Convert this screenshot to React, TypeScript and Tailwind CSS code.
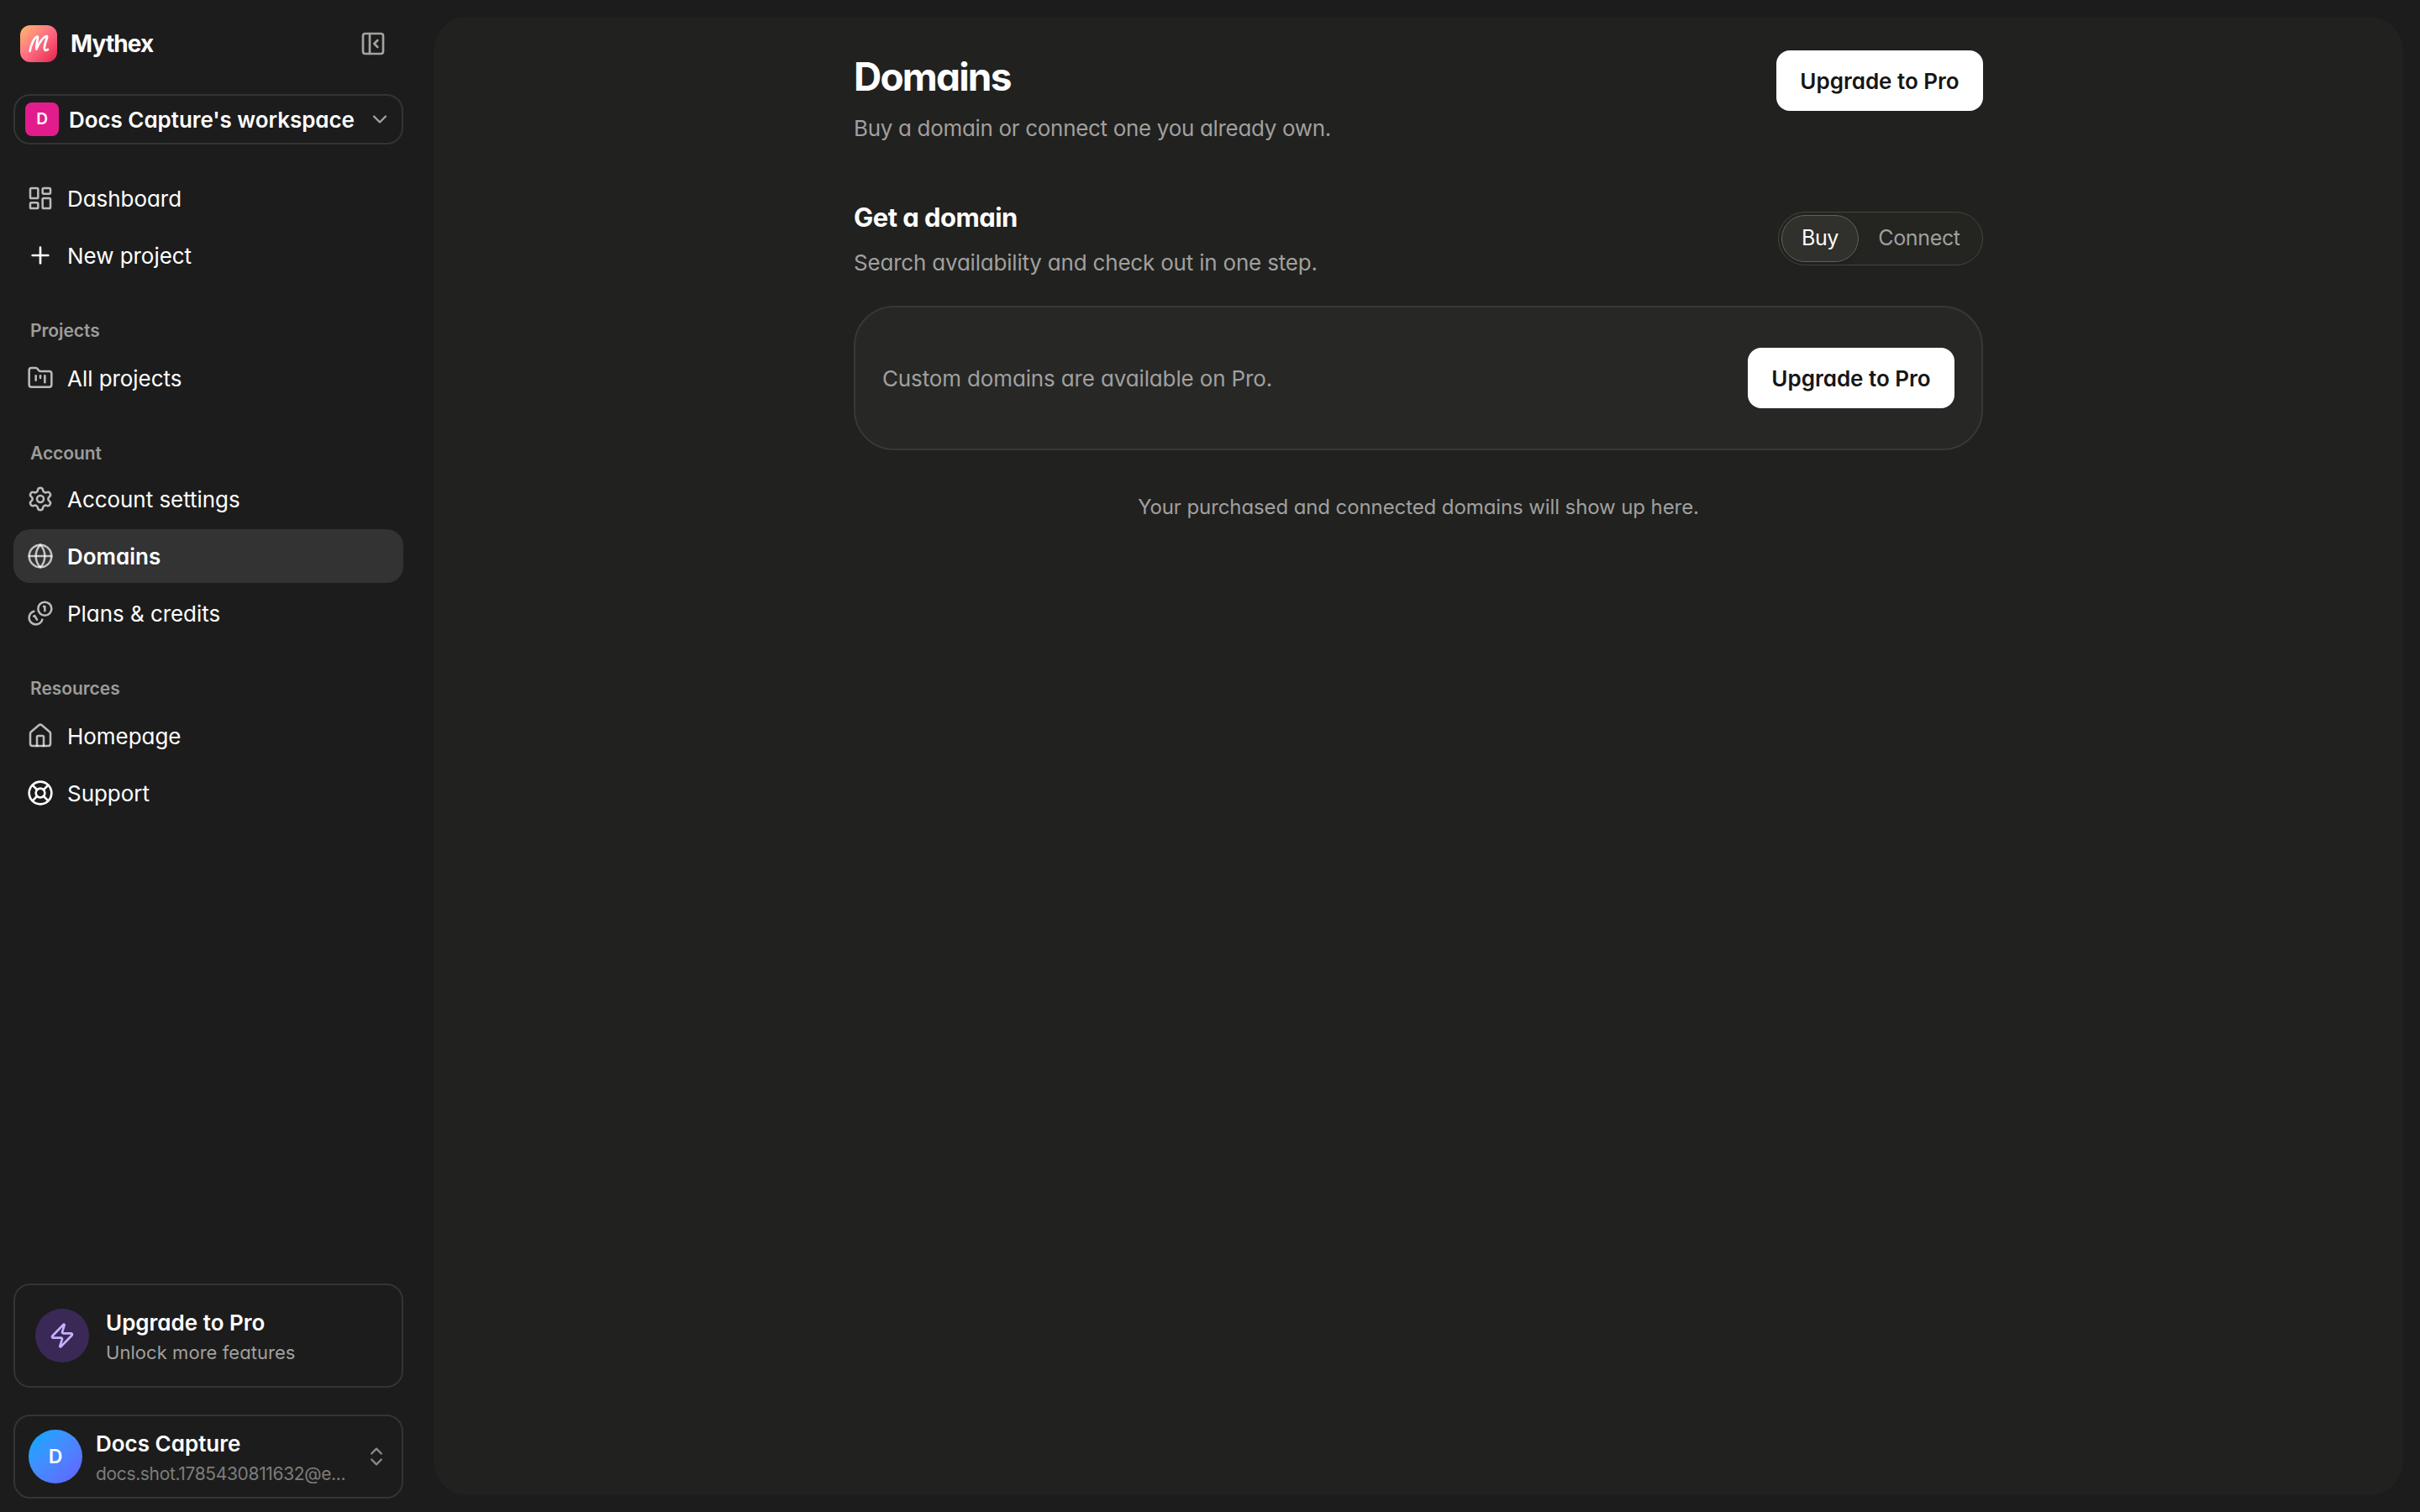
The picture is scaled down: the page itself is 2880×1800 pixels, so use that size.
import type { ComponentType, ReactNode } from "react";
import {
  ChevronDown,
  ChevronsUpDown,
  FolderKanban,
  Globe,
  House,
  LayoutDashboard,
  LifeBuoy,
  PanelLeftClose,
  Plus,
  Settings,
  Zap,
} from "lucide-react";

type IconType = ComponentType<{ className?: string; strokeWidth?: number | string }>;

function Logo() {
  return (
    <div className="flex size-11 items-center justify-center rounded-xl bg-linear-135 from-[#ffb86a] via-[#ff6b84] to-[#e0174a]">
      <svg viewBox="0 0 44 44" className="size-11" fill="none" stroke="#fff" strokeWidth="2.7" strokeLinecap="round" strokeLinejoin="round">
        <path d="M11.600 30.800C12.600 24 16.500 14.500 20.200 13.500C22.400 13.400 18.800 22 19.300 28.600C21.500 22.500 27.500 13.500 31.600 13C33.800 13 28.300 22.500 28.800 28C29.100 30.800 31.300 30 33 28.900" />
      </svg>
    </div>
  );
}

function Coins({ className, strokeWidth }: { className?: string; strokeWidth?: number | string }) {
  return (
    <svg viewBox="0 0 24 24" className={className} fill="none" stroke="currentColor" strokeWidth={strokeWidth} strokeLinecap="round" strokeLinejoin="round">
      <circle cx="16" cy="8" r="6" />
      <path d="M13.744 17.736a6 6 0 1 1-7.480-7.480" />
      <path d="M15 6h1v4" />
      <path d="m6.134 14.768.866-.5 2 3.464" />
    </svg>
  );
}

function NavItem({ icon: Icon, label, active, bright, stroke = 1.9 }: { icon: IconType; label: string; active?: boolean; bright?: boolean; stroke?: number }) {
  return (
    <a className={`flex h-16 items-center gap-4 rounded-[20px] px-4 text-[26px] ${active ? "bg-[#333333] font-semibold" : "tracking-[-0.05px]"}`}>
      <Icon className={`size-8 ${bright ? "text-white" : "text-white/70"}`} strokeWidth={stroke} />
      <span>{label}</span>
    </a>
  );
}

function NavSection({ title, className, children }: { title: string; className: string; children: ReactNode }) {
  return (
    <section className={className}>
      <h3 className="px-5 pt-px text-[21px] leading-7 font-semibold tracking-[-0.05px] text-[#9c9c9a]">{title}</h3>
      {children}
    </section>
  );
}

function Sidebar() {
  return (
    <aside className="flex w-[516px] shrink-0 flex-col pr-9 pl-4 pt-[30px] pb-4">
      <div className="flex h-11 items-center pr-5 pl-2">
        <Logo />
        <span className="ml-4 text-[28px] font-bold tracking-[-0.9px]">Mythex</span>
        <PanelLeftClose className="ml-auto size-8 text-[#a3a3a1]" strokeWidth={2} />
      </div>

      <button className="mt-[38px] flex h-[60px] items-center rounded-[20px] border-2 border-[#343433] px-3">
        <span className="flex size-10 items-center justify-center rounded-lg bg-[#e31c8d] text-[19px] font-semibold">D</span>
        <span className="ml-3 text-[26px] font-semibold tracking-[-0.05px]">Docs Capture's workspace</span>
        <ChevronDown className="ml-auto size-7 text-[#a3a3a1]" strokeWidth={2} />
      </button>

      <nav className="mt-8 flex flex-col">
        <div className="flex flex-col gap-1">
          <NavItem icon={LayoutDashboard} label="Dashboard" />
          <NavItem icon={Plus} label="New project" bright stroke={2} />
        </div>
        <NavSection title="Projects" className="mt-[43px]">
          <div className="mt-2.5">
            <NavItem icon={FolderKanban} label="All projects" />
          </div>
        </NavSection>
        <NavSection title="Account" className="mt-[43px]">
          <div className="mt-2 flex flex-col gap-1">
            <NavItem icon={Settings} label="Account settings" />
            <NavItem icon={Globe} label="Domains" active />
            <NavItem icon={Coins} label="Plans & credits" />
          </div>
        </NavSection>
        <NavSection title="Resources" className="mt-[43px]">
          <div className="mt-2.5 flex flex-col gap-1">
            <NavItem icon={House} label="Homepage" />
            <NavItem icon={LifeBuoy} label="Support" bright stroke={2} />
          </div>
        </NavSection>
      </nav>

      <div className="mt-auto flex flex-col gap-8">
        <div className="flex h-[124px] items-center gap-5 rounded-[20px] border-2 border-[#343433] px-6">
          <div className="flex size-16 items-center justify-center rounded-full bg-[#3a2956]">
            <Zap className="size-8 text-[#c4b4ff]" strokeWidth={2} />
          </div>
          <div className="flex flex-col gap-[3px] pt-px">
            <span className="text-[26px] leading-9 font-semibold">Upgrade to Pro</span>
            <span className="text-[22px] leading-7 tracking-[0.05px] text-[#a0a09e]">Unlock more features</span>
          </div>
        </div>
        <div className="flex h-[100px] items-center rounded-[20px] border-2 border-[#343433] px-4">
          <div className="flex size-16 items-center justify-center rounded-full bg-linear-135 from-[#00a6ff] from-10% to-[#615fff] text-[23px] font-semibold">D</div>
          <div className="ml-4 flex flex-col gap-1 pt-1.5">
            <span className="text-[26px] leading-8 font-semibold">Docs Capture</span>
            <span className="text-[21px] leading-8 tracking-[-0.35px] text-[#7d7d7b]">docs.shot.1785430811632@e...</span>
          </div>
          <ChevronsUpDown className="ml-auto size-7 text-[#8a8a88]" strokeWidth={2} />
        </div>
      </div>
    </aside>
  );
}

function UpgradeButton() {
  return (
    <button className="flex h-[72px] w-[246px] items-center justify-center rounded-2xl bg-white text-[26px] font-semibold text-[#161616]">
      Upgrade to Pro
    </button>
  );
}

export default function App() {
  return (
    <div className="flex h-[1800px] w-[2880px] overflow-hidden bg-[#1c1c1c] font-['Inter',sans-serif] text-white [font-feature-settings:'cv11']">
      <Sidebar />
      <main className="my-5 mr-5 flex flex-1 justify-center rounded-[40px] bg-[#212120]">
        <div className="flex w-[1344px] flex-col pt-10">
          <header className="flex items-start justify-between">
            <div>
              <h1 className="text-[46px] leading-[62px] font-bold tracking-[-1.8px]">Domains</h1>
              <p className="mt-[13px] text-[26px] leading-9 tracking-[-0.32px] text-[#a0a09e]">Buy a domain or connect one you already own.</p>
            </div>
            <UpgradeButton />
          </header>

          <div className="mt-[68px] flex justify-between">
            <div>
              <h2 className="text-[31px] leading-10 font-bold tracking-[-0.55px]">Get a domain</h2>
              <p className="mt-4 text-[26px] leading-9 tracking-[-0.2px] text-[#a0a09e]">Search availability and check out in one step.</p>
            </div>
            <div className="mt-[13px] flex h-16 rounded-full border border-[#444440] bg-[#242420] p-[3px] text-[25px] tracking-[-0.35px]">
              <button className="flex w-[92px] items-center justify-center rounded-full border border-[#60605c] bg-[#30302d] shadow-md">Buy</button>
              <button className="flex w-36 items-center justify-center text-[#a0a09e]">Connect</button>
            </div>
          </div>

          <div className="mt-[33px] flex h-[172px] items-center justify-between rounded-[48px] border-2 border-[#383836] bg-[#272726] px-8">
            <p className="text-[26px] tracking-[-0.14px] text-[#a0a09e]">Custom domains are available on Pro.</p>
            <UpgradeButton />
          </div>

          <p className="mt-[50px] text-center text-[24px] leading-9 tracking-[-0.1px] text-[#a0a09e]">
            Your purchased and connected domains will show up here.
          </p>
        </div>
      </main>
    </div>
  );
}
